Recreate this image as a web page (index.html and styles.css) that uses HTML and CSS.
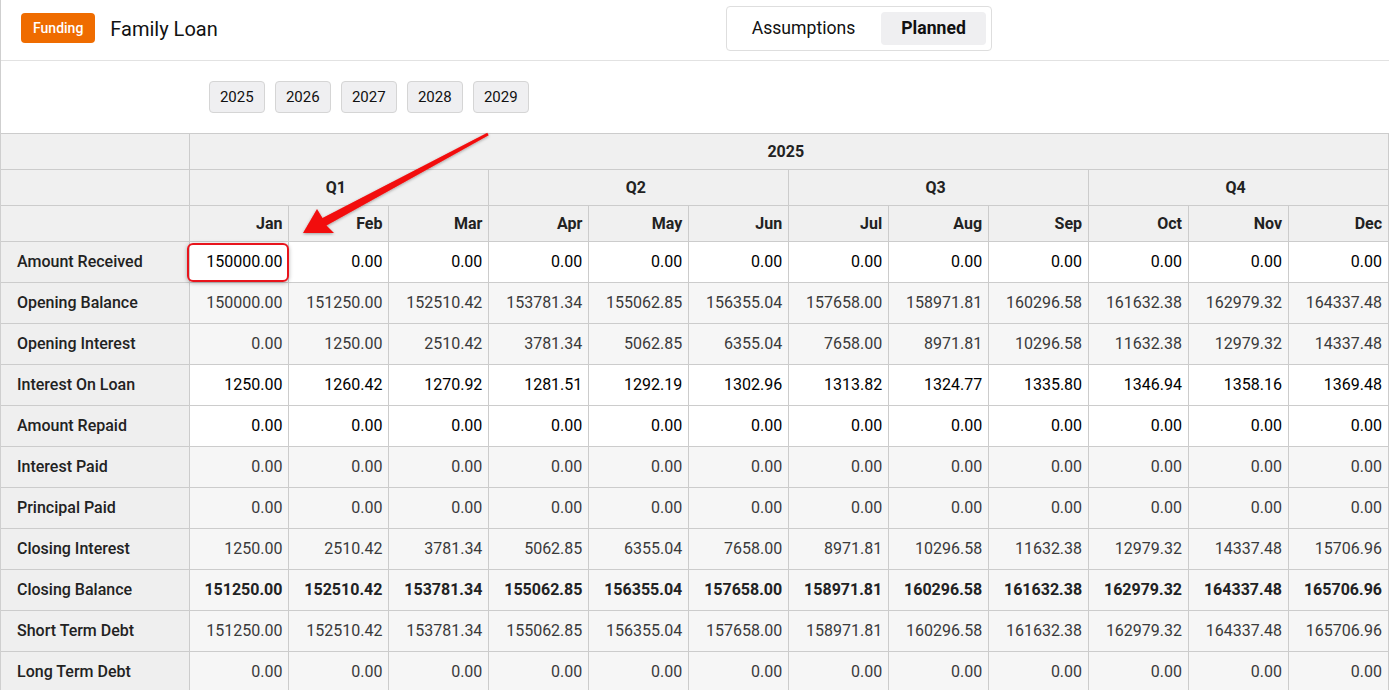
FILE: index.html
```html
<!DOCTYPE html>
<html>
<head>
<meta charset="utf-8">
<link rel="stylesheet" href="styles.css">
</head>
<body>
<div class="page">
  <header class="topbar">
    <div class="title-group">
      <span class="badge">Funding</span>
      <span class="title">Family Loan</span>
    </div>
    <div class="toggle">
      <button class="toggle-btn">Assumptions</button>
      <button class="toggle-btn active">Planned</button>
    </div>
  </header>
  <div class="years">
    <button class="year">2025</button>
    <button class="year">2026</button>
    <button class="year">2027</button>
    <button class="year">2028</button>
    <button class="year">2029</button>
  </div>
  <table class="grid">
    <colgroup>
      <col class="c-label">
      <col><col><col><col><col><col><col><col><col><col><col><col>
    </colgroup>
    <thead>
      <tr><th class="lh"></th><th colspan="12" class="center">2025</th></tr>
      <tr><th class="lh"></th><th colspan="3" class="center">Q1</th><th colspan="3" class="center">Q2</th><th colspan="3" class="center">Q3</th><th colspan="3" class="center">Q4</th></tr>
      <tr><th class="lh"></th><th>Jan</th><th>Feb</th><th>Mar</th><th>Apr</th><th>May</th><th>Jun</th><th>Jul</th><th>Aug</th><th>Sep</th><th>Oct</th><th>Nov</th><th>Dec</th></tr>
    </thead>
    <tbody>
      <tr class="edit"><td class="label">Amount Received</td><td class="marked"><span class="mark"></span>150000.00</td><td>0.00</td><td>0.00</td><td>0.00</td><td>0.00</td><td>0.00</td><td>0.00</td><td>0.00</td><td>0.00</td><td>0.00</td><td>0.00</td><td>0.00</td></tr>
      <tr class="calc"><td class="label">Opening Balance</td><td>150000.00</td><td>151250.00</td><td>152510.42</td><td>153781.34</td><td>155062.85</td><td>156355.04</td><td>157658.00</td><td>158971.81</td><td>160296.58</td><td>161632.38</td><td>162979.32</td><td>164337.48</td></tr>
      <tr class="calc"><td class="label">Opening Interest</td><td>0.00</td><td>1250.00</td><td>2510.42</td><td>3781.34</td><td>5062.85</td><td>6355.04</td><td>7658.00</td><td>8971.81</td><td>10296.58</td><td>11632.38</td><td>12979.32</td><td>14337.48</td></tr>
      <tr class="edit"><td class="label">Interest On Loan</td><td>1250.00</td><td>1260.42</td><td>1270.92</td><td>1281.51</td><td>1292.19</td><td>1302.96</td><td>1313.82</td><td>1324.77</td><td>1335.80</td><td>1346.94</td><td>1358.16</td><td>1369.48</td></tr>
      <tr class="edit"><td class="label">Amount Repaid</td><td>0.00</td><td>0.00</td><td>0.00</td><td>0.00</td><td>0.00</td><td>0.00</td><td>0.00</td><td>0.00</td><td>0.00</td><td>0.00</td><td>0.00</td><td>0.00</td></tr>
      <tr class="calc"><td class="label">Interest Paid</td><td>0.00</td><td>0.00</td><td>0.00</td><td>0.00</td><td>0.00</td><td>0.00</td><td>0.00</td><td>0.00</td><td>0.00</td><td>0.00</td><td>0.00</td><td>0.00</td></tr>
      <tr class="calc"><td class="label">Principal Paid</td><td>0.00</td><td>0.00</td><td>0.00</td><td>0.00</td><td>0.00</td><td>0.00</td><td>0.00</td><td>0.00</td><td>0.00</td><td>0.00</td><td>0.00</td><td>0.00</td></tr>
      <tr class="calc"><td class="label">Closing Interest</td><td>1250.00</td><td>2510.42</td><td>3781.34</td><td>5062.85</td><td>6355.04</td><td>7658.00</td><td>8971.81</td><td>10296.58</td><td>11632.38</td><td>12979.32</td><td>14337.48</td><td>15706.96</td></tr>
      <tr class="calc bold"><td class="label">Closing Balance</td><td>151250.00</td><td>152510.42</td><td>153781.34</td><td>155062.85</td><td>156355.04</td><td>157658.00</td><td>158971.81</td><td>160296.58</td><td>161632.38</td><td>162979.32</td><td>164337.48</td><td>165706.96</td></tr>
      <tr class="calc"><td class="label">Short Term Debt</td><td>151250.00</td><td>152510.42</td><td>153781.34</td><td>155062.85</td><td>156355.04</td><td>157658.00</td><td>158971.81</td><td>160296.58</td><td>161632.38</td><td>162979.32</td><td>164337.48</td><td>165706.96</td></tr>
      <tr class="calc"><td class="label">Long Term Debt</td><td>0.00</td><td>0.00</td><td>0.00</td><td>0.00</td><td>0.00</td><td>0.00</td><td>0.00</td><td>0.00</td><td>0.00</td><td>0.00</td><td>0.00</td><td>0.00</td></tr>
    </tbody>
  </table>
  <svg class="arrow" width="1389" height="690" viewBox="0 0 1389 690">
    <defs>
      <filter id="sh" x="-20%" y="-20%" width="140%" height="140%">
        <feDropShadow dx="0" dy="1" stdDeviation="1.5" flood-color="#000" flood-opacity="0.35"/>
      </filter>
    </defs>
    <polygon filter="url(#sh)" fill="#f20a0a" points="303,233 317,209 322.5,218 487.3,132.8 488.7,135.2 326.5,225.5 334,233"/>
  </svg>
</div>
</body>
</html>
```

FILE: styles.css
```css
html, body {
  margin: 0;
  padding: 0;
  background: #fff;
  overflow: hidden;
}
body {
  font-family: Roboto, "Liberation Sans", Arial, sans-serif;
  color: #111;
}
.page {
  position: relative;
  width: 1389px;
  height: 690px;
  box-sizing: border-box;
  border-left: 1px solid #cfcfcf;
  overflow: hidden;
}
.topbar {
  height: 60px;
  border-bottom: 1px solid #e2e2e2;
  display: flex;
  align-items: center;
  padding-left: 20px;
}
.title-group {
  display: flex;
  align-items: center;
  gap: 15px;
}
.badge {
  display: inline-flex;
  align-items: center;
  height: 30px;
  padding: 0 12px;
  background: #ef6c00;
  color: #fff;
  font-size: 14px;
  font-weight: 500;
  border-radius: 4px;
  margin-top: -4px;
}
.title {
  font-size: 20px;
  color: #111;
  margin-top: -2px;
}
.toggle {
  margin-left: 508px;
  margin-top: -4px;
  display: flex;
  align-items: center;
  gap: 6px;
  padding: 5px;
  border: 1px solid #dedede;
  border-radius: 4px;
}
.toggle-btn {
  font-family: Roboto, "Liberation Sans", sans-serif;
  font-size: 17.6px;
  height: 33px;
  padding: 0 20px;
  border: none;
  background: transparent;
  color: #111;
  border-radius: 4px;
}
.toggle-btn.active {
  background: #efeff1;
  font-weight: 700;
}
.years {
  display: flex;
  gap: 10.5px;
  padding: 20px 0 0 208px;
  height: 72px;
  box-sizing: border-box;
}
.year {
  font-family: Roboto, "Liberation Sans", sans-serif;
  font-size: 15px;
  height: 32px;
  width: 55.5px;
  padding: 0;
  border: 1px solid #d5d5d5;
  border-radius: 4px;
  background: #efeff1;
  color: #111;
}
.grid {
  border-collapse: collapse;
  table-layout: fixed;
  width: 1388px;
  font-size: 16px;
}
.c-label { width: 188px; }
.grid th, .grid td {
  border: 1px solid #cccccc;
  padding: 0 6px 1px 0;
  text-align: right;
  white-space: nowrap;
}
.grid tr > :first-child { border-left: none; }
.grid th {
  height: 34px;
  background: #f0f0f0;
  font-weight: 700;
  color: #222;
}
.grid th.center { text-align: center; }
.grid td {
  height: 39px;
}
.grid td.label {
  text-align: left;
  padding-left: 16px;
  background: #efefef;
  font-weight: 500;
  color: #222;
}
.edit td { background: #fff; color: #000; }
.calc td { background: #f6f6f6; color: #3a3a3a; }
.bold td { font-weight: 700; color: #222; }
.marked { position: relative; }
.mark {
  position: absolute;
  left: -3px;
  top: 1px;
  right: -1px;
  bottom: 0;
  border: 2px solid #e8141c;
  border-radius: 6px;
  box-shadow: 0 1px 4px rgba(0,0,0,0.3);
}
.arrow {
  position: absolute;
  left: -1px;
  top: 0;
  pointer-events: none;
}
```
